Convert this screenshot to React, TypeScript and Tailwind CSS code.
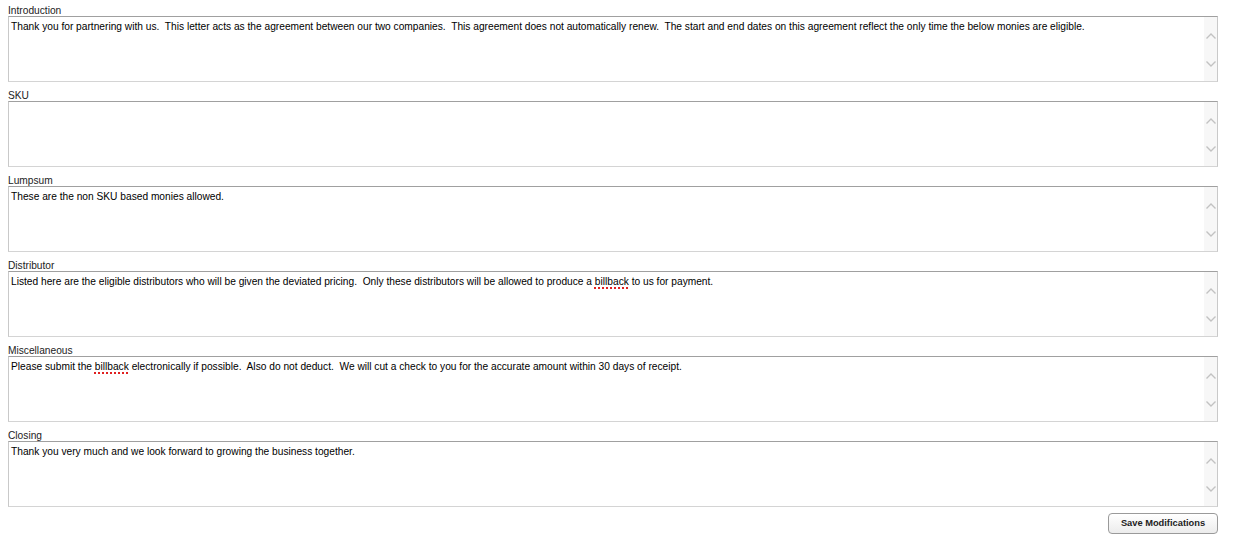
type Field = {
  label: string;
  parts: { text: string; misspelled?: boolean }[];
};

const fields: Field[] = [
  {
    label: "Introduction",
    parts: [
      {
        text: "Thank you for partnering with us.  This letter acts as the agreement between our two companies.  This agreement does not automatically renew.  The start and end dates on this agreement reflect the only time the below monies are eligible.",
      },
    ],
  },
  { label: "SKU", parts: [] },
  {
    label: "Lumpsum",
    parts: [{ text: "These are the non SKU based monies allowed." }],
  },
  {
    label: "Distributor",
    parts: [
      {
        text: "Listed here are the eligible distributors who will be given the deviated pricing.  Only these distributors will be allowed to produce a ",
      },
      { text: "billback", misspelled: true },
      { text: " to us for payment." },
    ],
  },
  {
    label: "Miscellaneous",
    parts: [
      { text: "Please submit the " },
      { text: "billback", misspelled: true },
      {
        text: " electronically if possible.  Also do not deduct.  We will cut a check to you for the accurate amount within 30 days of receipt.",
      },
    ],
  },
  {
    label: "Closing",
    parts: [
      {
        text: "Thank you very much and we look forward to growing the business together.",
      },
    ],
  },
];

const Arrow = ({ down }: { down?: boolean }) => (
  <svg width="10" height="6" viewBox="0 0 10 6" fill="none" stroke="#c2c2c2" strokeWidth="1.4">
    {down ? <polyline points="0.5,0.5 5,5 9.5,0.5" /> : <polyline points="0.5,5.5 5,1 9.5,5.5" />}
  </svg>
);

const TextBox = ({ field }: { field: Field }) => {
  return (
    <div className="mb-[3px] flex flex-col">
      <label className="h-[16px] pt-[5px] text-[10.2px] leading-[11px] text-[#222]">
        {field.label}
      </label>
      {/* fake textarea with always-visible scrollbar */}
      <div className="flex h-[66px] border border-t-[#a0a0a0] border-x-[#c9c9c9] border-b-[#d4d4d4] bg-white">
        <div className="flex-1 px-[2px] pt-[3px] text-[10.2px] leading-[13px] text-black whitespace-pre-wrap">
          {field.parts.map((p, i) =>
            p.misspelled ? (
              <span
                key={i}
                className="underline decoration-dotted decoration-[#e02020] decoration-2 underline-offset-2"
              >
                {p.text}
              </span>
            ) : (
              <span key={i}>{p.text}</span>
            )
          )}
        </div>
        <div className="flex w-[13px] flex-col items-center bg-[#f7f7f7] pt-[16px]">
          <Arrow />
          <div className="h-[22px]" />
          <Arrow down />
        </div>
      </div>
    </div>
  );
};

export default function App() {
  return (
    <div
      className="min-h-[545px] w-[1244px] bg-white pl-[8px] pr-[26px]"
      style={{ fontFamily: '"Liberation Sans", Arial, sans-serif' }}
    >
      {fields.map((f) => (
        <TextBox key={f.label} field={f} />
      ))}
      <div className="flex justify-end pt-[3px]">
        <button className="h-[21px] w-[110px] rounded-[4px] border border-[#9a9a9a] bg-gradient-to-b from-white to-[#ececec] text-[9.3px] font-bold text-[#222] shadow-[inset_0_1px_0_#fff]">
          Save Modifications
        </button>
      </div>
    </div>
  );
}
